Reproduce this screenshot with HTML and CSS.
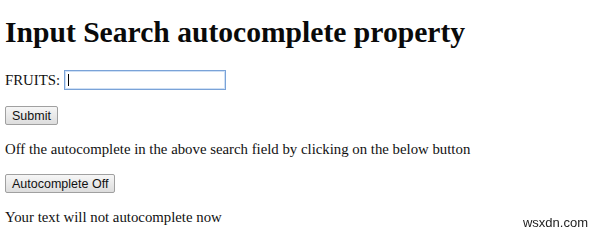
FILE: index.html
```html
<!DOCTYPE html>
<html>
<head>
  <meta charset="UTF-8">
  <title>Input Search autocomplete property</title>
  <link rel="stylesheet" href="styles.css">
</head>
<body>
  <h1 class="title">Input Search autocomplete property</h1>
  <form class="fruit-form">
    <label class="field">FRUITS:
      <span class="search-wrap">
        <input type="search" class="search-box" id="fruits" autocomplete="on">
        <span class="caret"></span>
      </span>
    </label>
    <div class="row"><button type="submit" class="btn">Submit</button></div>
  </form>
  <p class="info">Off the autocomplete in the above search field by clicking on the below button</p>
  <div class="row tight"><button type="button" class="btn" id="offBtn">Autocomplete Off</button></div>
  <p class="info last" id="result">Your text will not autocomplete now</p>
  <div class="watermark">wsxdn.com</div>
</body>
</html>
```

FILE: styles.css
```css
* {
  box-sizing: border-box;
}

html,
body {
  overflow: hidden;
}

body {
  margin: 0;
  padding: 5px;
  font-family: 'Liberation Serif', 'Times New Roman', serif;
  font-size: 14.8px;
  color: #111;
  background: #fff;
}

.title {
  font-size: 29.6px;
  font-weight: bold;
  margin: 11px 0 21px;
  color: #0a0a0a;
}

.fruit-form {
  margin: 0;
}

.field {
  display: flex;
  align-items: center;
  gap: 4px;
  height: 20px;
}

/* input + fake text caret on top */
.search-wrap {
  position: relative;
  display: inline-block;
}

.search-box {
  display: block;
  width: 162px;
  height: 20px;
  border: 1px solid #7aa3d8;
  box-shadow: 0 0 0 1px #cfe0f5 inset;
  outline: none;
  padding: 1px 3px;
  font: 13px 'Liberation Sans', Arial, sans-serif;
  caret-color: transparent;
}

.caret {
  position: absolute;
  left: 4px;
  top: 4px;
  width: 1px;
  height: 12px;
  background: #000;
}

.row {
  margin: 16px 0;
}

.row.tight {
  margin: 14px 0 13px;
}

.btn {
  font: 12.5px 'Liberation Sans', Arial, sans-serif;
  color: #111;
  background: linear-gradient(#f6f6f6, #dddddd);
  border: 1px solid #a0a0a0;
  border-radius: 2px;
  padding: 1px 6px;
  height: 19px;
}

.info {
  margin: 16px 0;
}

.info.last {
  margin-bottom: 0;
}

.watermark {
  position: fixed;
  right: 12px;
  bottom: 3px;
  font: 13px 'Liberation Sans', Arial, sans-serif;
  color: #222;
}
```
